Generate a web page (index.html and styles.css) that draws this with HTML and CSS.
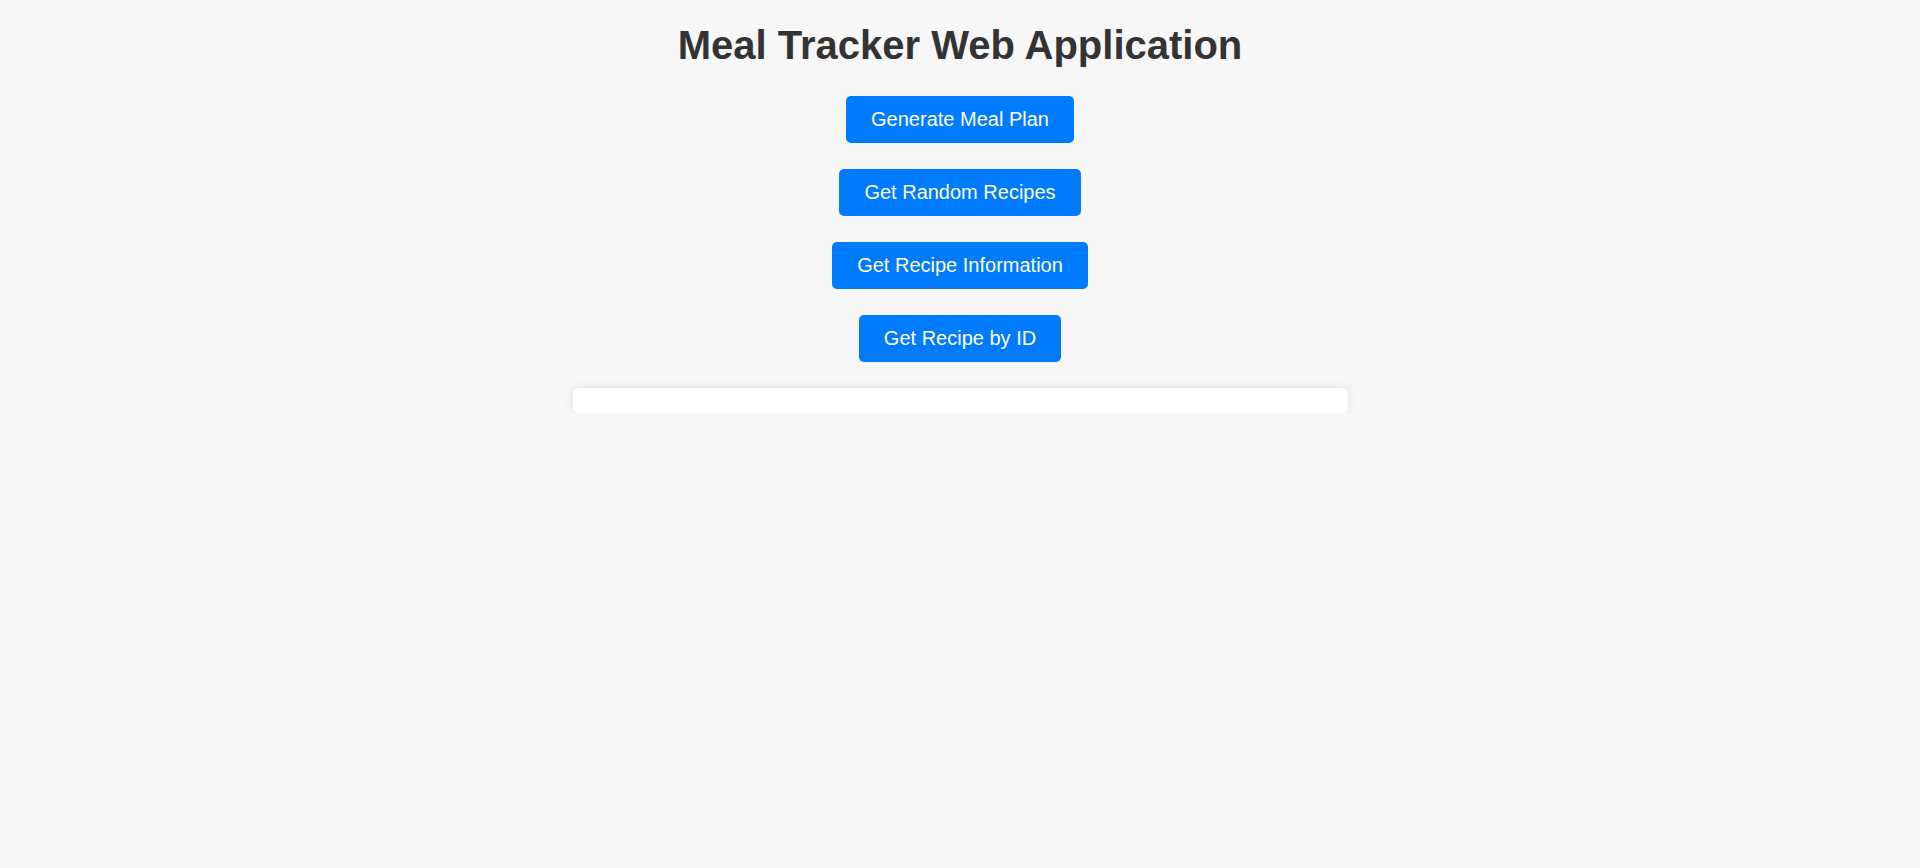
FILE: index.html
```html
<!DOCTYPE html>
<html lang="en">
<head>
<meta charset="utf-8">
<title>Meal Tracker Web Application</title>
<link rel="stylesheet" href="styles.css">
</head>
<body>
  <main class="app">
    <h1 class="title">Meal Tracker Web Application</h1>
    <div class="actions">
      <button class="btn" type="button">Generate Meal Plan</button>
      <button class="btn" type="button">Get Random Recipes</button>
      <button class="btn" type="button">Get Recipe Information</button>
      <button class="btn" type="button">Get Recipe by ID</button>
    </div>
    <div class="results"></div>
  </main>
</body>
</html>
```

FILE: styles.css
```css
html, body {
  margin: 0;
  padding: 0;
}

body {
  background: #f7f7f7;
  font-family: "Liberation Sans", Arial, sans-serif;
  color: #333333;
}

.app {
  display: flex;
  flex-direction: column;
  align-items: center;
  padding-top: 22px;
}

.title {
  margin: 0 0 28px;
  font-size: 40px;
  line-height: 46px;
  font-weight: bold;
  color: #333333;
  text-align: center;
}

.actions {
  display: flex;
  flex-direction: column;
  align-items: center;
  gap: 26px;
}

.btn {
  font-family: "Liberation Sans", Arial, sans-serif;
  font-size: 20px;
  line-height: 23px;
  padding: 12px 25px;
  border: none;
  border-radius: 5px;
  background: #007bff;
  color: #ffffff;
  cursor: pointer;
}

.results {
  margin-top: 26px;
  width: 750px;
  padding: 12.5px;
  background: #ffffff;
  border-radius: 5px;
  box-shadow: 0 0 10px rgba(0, 0, 0, 0.1);
}
```
